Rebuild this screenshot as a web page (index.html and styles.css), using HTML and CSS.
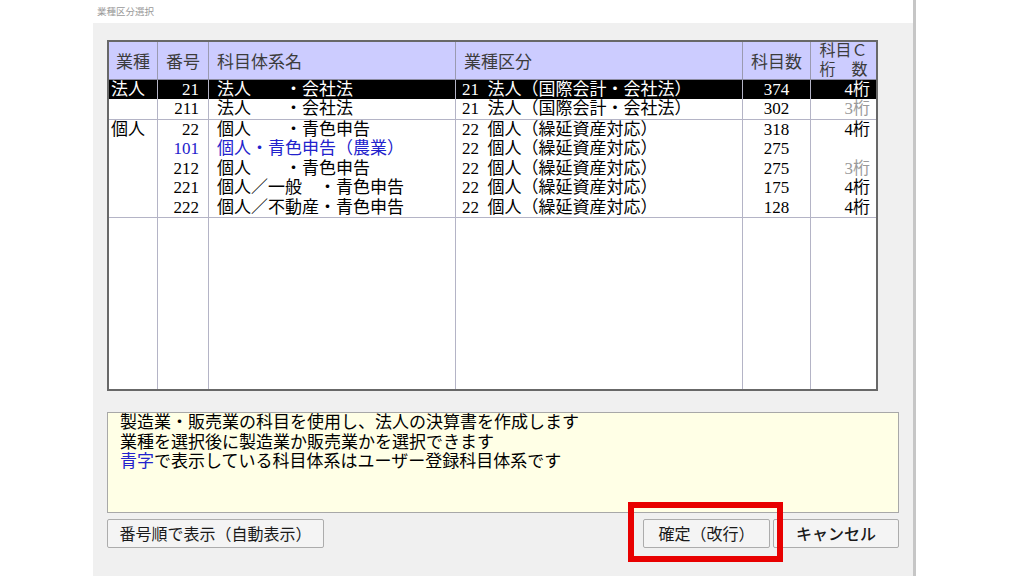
FILE: index.html
```html
<!DOCTYPE html>
<html lang="ja">
<head>
<meta charset="utf-8">
<title>業種区分選択</title>
<link rel="stylesheet" href="styles.css">
</head>
<body>
<div class="dialog">
  <div class="title">業種区分選択</div>
  <div class="panel">
    <div class="grid">
      <div class="row head">
        <div class="c center">業種</div>
        <div class="c center">番号</div>
        <div class="c left">科目体系名</div>
        <div class="c left">業種区分</div>
        <div class="c center">科目数</div>
        <div class="c center two"><span class="ln">科目Ｃ</span><span class="ln">桁　数</span></div>
      </div>
      <div class="row sel">
        <div class="c kind">法人</div>
        <div class="c num">21</div>
        <div class="c name">法人　　・会社法</div>
        <div class="c cat">21&nbsp; 法人（国際会計・会社法）</div>
        <div class="c cnt">374</div>
        <div class="c dig">4桁</div>
      </div>
      <div class="row sep">
        <div class="c kind"></div>
        <div class="c num">211</div>
        <div class="c name">法人　　・会社法</div>
        <div class="c cat">21&nbsp; 法人（国際会計・会社法）</div>
        <div class="c cnt">302</div>
        <div class="c dig gray">3桁</div>
      </div>
      <div class="group sep">
        <div class="row">
          <div class="c kind">個人</div>
          <div class="c num">22</div>
          <div class="c name">個人　　・青色申告</div>
          <div class="c cat">22&nbsp; 個人（繰延資産対応）</div>
          <div class="c cnt">318</div>
          <div class="c dig">4桁</div>
        </div>
        <div class="row blue">
          <div class="c kind"></div>
          <div class="c num">101</div>
          <div class="c name">個人・青色申告（農業）</div>
          <div class="c cat">22&nbsp; 個人（繰延資産対応）</div>
          <div class="c cnt">275</div>
          <div class="c dig"></div>
        </div>
        <div class="row">
          <div class="c kind"></div>
          <div class="c num">212</div>
          <div class="c name">個人　　・青色申告</div>
          <div class="c cat">22&nbsp; 個人（繰延資産対応）</div>
          <div class="c cnt">275</div>
          <div class="c dig gray">3桁</div>
        </div>
        <div class="row">
          <div class="c kind"></div>
          <div class="c num">221</div>
          <div class="c name">個人／一般　・青色申告</div>
          <div class="c cat">22&nbsp; 個人（繰延資産対応）</div>
          <div class="c cnt">175</div>
          <div class="c dig">4桁</div>
        </div>
        <div class="row">
          <div class="c kind"></div>
          <div class="c num">222</div>
          <div class="c name">個人／不動産・青色申告</div>
          <div class="c cat">22&nbsp; 個人（繰延資産対応）</div>
          <div class="c cnt">128</div>
          <div class="c dig">4桁</div>
        </div>
      </div>
      <div class="row filler">
        <div class="c"></div>
        <div class="c"></div>
        <div class="c"></div>
        <div class="c"></div>
        <div class="c"></div>
        <div class="c"></div>
      </div>
    </div>

    <div class="info">
      <div>製造業・販売業の科目を使用し、法人の決算書を作成します</div>
      <div>業種を選択後に製造業か販売業かを選択できます</div>
      <div><span class="bluetext">青字</span>で表示している科目体系はユーザー登録科目体系です</div>
    </div>

    <div class="buttons">
      <button class="btn wide">番号順で表示（自動表示）</button>
      <div class="spacer"></div>
      <div class="mark">
        <button class="btn ok">確定（改行）</button>
        <div class="redframe"></div>
      </div>
      <button class="btn cancel">キャンセル</button>
    </div>
  </div>
</div>
</body>
</html>
```

FILE: styles.css
```css
* { box-sizing: border-box; }
html, body { margin: 0; padding: 0; background: #ffffff; }
body { width: 1024px; height: 576px; overflow: hidden; font-family: "Liberation Serif", "Noto Sans CJK JP", serif; }

.dialog {
  margin-left: 93px;
  width: 823px;
  border-right: 3px solid #c6c6c6;
  height: 576px;
  display: flex;
  flex-direction: column;
}
.title {
  height: 23px;
  line-height: 23px;
  padding-left: 4px;
  font-family: "Noto Sans CJK JP", sans-serif;
  font-size: 9.5px;
  color: #9a9a9a;
  background: #ffffff;
}
.panel {
  flex: 1;
  background: #f0f0f0;
  padding: 17px 0 0 14px;
}

.grid {
  width: 771px;
  height: 351px;
  border: 2px solid #686868;
  background: #ffffff;
  display: flex;
  flex-direction: column;
  font-size: 17px;
  color: #000;
}
.row {
  display: grid;
  grid-template-columns: 48px 51px 247px 287px 68px 66px;
  height: 19.4px;
  line-height: 19.4px;
}
.row .c {
  border-left: 1px solid #b4b4c6;
  white-space: nowrap;
  overflow: hidden;
}
.row .c:first-child { border-left: none; }

.head {
  height: 38px;
  background: #ccccff;
  border-bottom: 1px solid #8a8aa0;
  font-family: "Noto Sans CJK JP", sans-serif;
  color: #3c3c3c;
  line-height: 37px;
}
.head .c { border-left-color: #9a9ab0; overflow: visible; }
.head .center { text-align: center; }
.head .left { padding-left: 8px; }
.head .two {
  display: flex;
  flex-direction: column;
  justify-content: center;
  align-items: center;
  font-family: "Liberation Sans", "Noto Sans CJK JP", sans-serif;
  font-size: 16px;
  line-height: 18.5px;
}
.head .ln { display: block; height: 18.5px; }

.sel { background: #000; color: #fff; height: 19px; line-height: 19px; }
.sep { border-bottom: 1px solid #b4b4c6; }
.row.sep { height: 21px; line-height: 20px; }

.kind { padding-left: 2px; }
.num { text-align: right; padding-right: 9px; }
.name { padding-left: 8px; }
.cat { padding-left: 6px; }
.cnt { text-align: center; }
.dig { text-align: right; padding-right: 6px; }
.gray { color: #9a9a9a; }
.blue { color: #2222cc; }
.blue .cat, .blue .cnt { color: #000; }

.filler { flex: 1; height: auto; }

.info {
  width: 792px;
  height: 101px;
  margin-top: 21px;
  border: 1px solid #a8a8a8;
  background: #ffffe6;
  padding: 0 0 0 12px;
  font-size: 17px;
  line-height: 19.5px;
  color: #000;
}
.bluetext { color: #2222cc; }

.buttons {
  width: 792px;
  margin-top: 6px;
  display: flex;
  align-items: center;
}
.spacer { flex: 1; }
.btn {
  height: 29px;
  border: 1px solid #acacac;
  border-radius: 2px;
  background: #f4f4f4;
  font-family: "Noto Sans CJK JP", sans-serif;
  font-size: 16px;
  color: #1a1a1a;
  padding: 0;
  line-height: 27px;
}
.wide { width: 217px; }
.ok { width: 127px; }
.cancel { width: 126px; margin-left: 3px; font-weight: 500; }
.mark { position: relative; display: flex; }
.redframe {
  position: absolute;
  left: -15px;
  top: -17px;
  width: 155px;
  height: 60px;
  border: 6px solid #e80000;
  pointer-events: none;
}
```
